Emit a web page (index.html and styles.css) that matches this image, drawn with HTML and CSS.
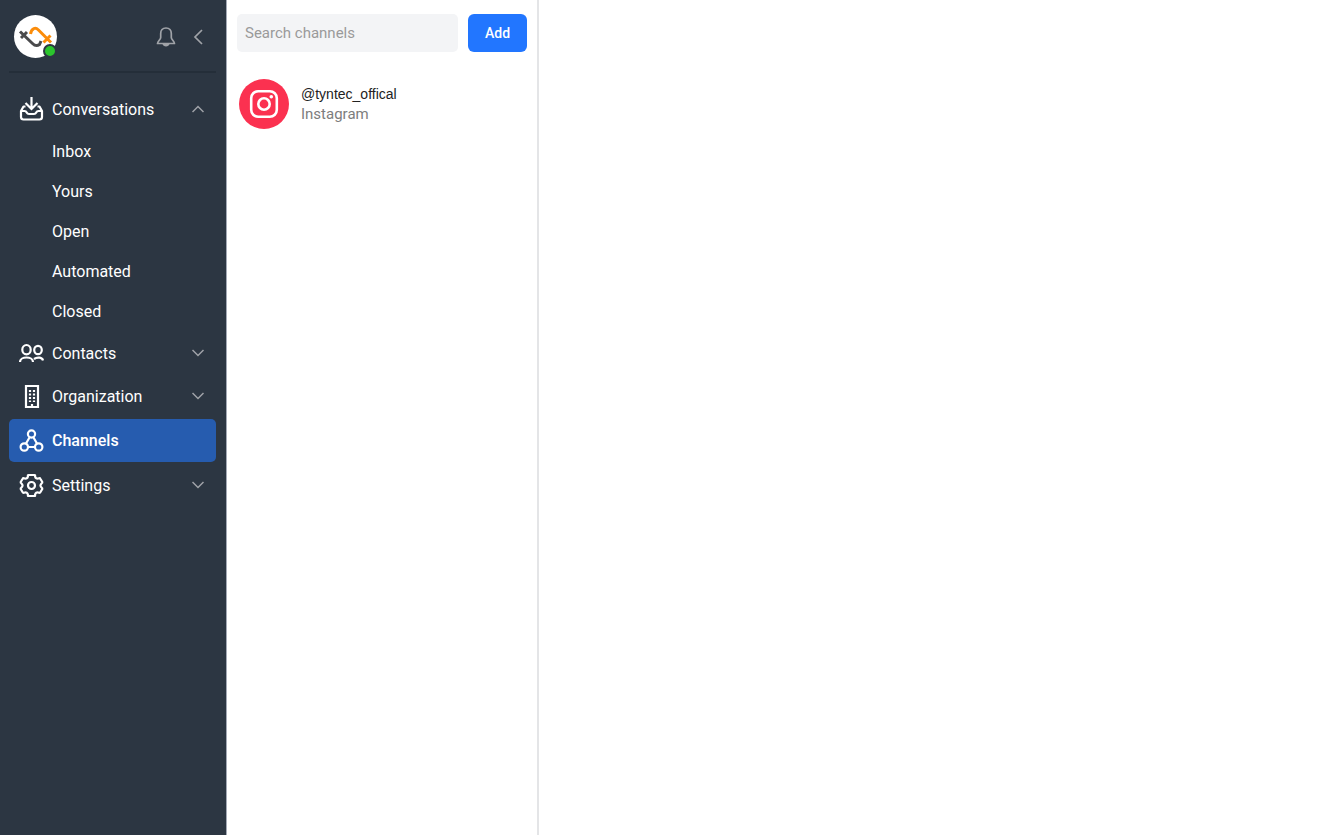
FILE: index.html
```html
<!DOCTYPE html>
<html lang="en">
<head>
    <meta charset="UTF-8">
    <meta name="viewport" content="width=device-width, initial-scale=1.0">
    <title>Channels</title>
    <link rel="stylesheet" href="styles.css">
</head>
<body>
    <div class="app">
        <aside class="sidebar">
            <div class="sidebar-header">
                <div class="avatar">
                    <svg width="43" height="43" viewBox="0 0 43 43" fill="none" stroke-width="3">
                        <path stroke="#4a4a4c" d="M6 16.500L18.500 28.500Q22 32 25.500 29.500L27 26M7 23l6-6"/>
                        <path stroke="#fb8c0a" d="M16.500 19Q17 15 20 13.500Q22 12.500 24.500 15L37 27.500M29.500 27.500l7-7"/>
                    </svg>
                    <span class="status"></span>
                </div>
                <button class="icon-button" aria-label="Notifications">
                    <svg width="20" height="22" viewBox="0 0 20 22" fill="none" stroke="currentColor" stroke-width="1.7" stroke-linejoin="round">
                        <path d="M10 2C6.500 2 4.700 4.500 4.700 7.500v4c0 2-2.900 3.500-3.200 6h17c-.3-2.500-3.200-4-3.200-6v-4C15.300 4.500 13.500 2 10 2z"/>
                        <path fill="currentColor" stroke="none" d="M6.500 18h7c-.3 1.600-1.800 2.500-3.500 2.500S6.800 19.600 6.500 18z"/>
                    </svg>
                </button>
                <button class="icon-button collapse" aria-label="Collapse menu">
                    <svg width="10" height="16" viewBox="0 0 10 16" fill="none" stroke="currentColor" stroke-width="1.7">
                        <path d="M9 1L2 8l7 7"/>
                    </svg>
                </button>
            </div>

            <nav class="menu">
                <a class="menu-item" href="#">
                    <svg class="icon" viewBox="0 0 25 25">
                        <path d="M12.500 0v11.500M6.500 6l6 6 6-6"/>
                        <path stroke-linejoin="round" d="M6.500 9.500H4.500L2 14v6q0 2.500 2.500 2.500h16q2.500 0 2.500-2.500v-6l-2.500-4.500h-2"/>
                        <path d="M2 14h3.500q1.500 0 2.200 1.500t2.300 1.500h5q1.500 0 2.200-1.500t2.300-1.500H23"/>
                    </svg>
                    <span>Conversations</span>
                    <svg class="chevron" viewBox="0 0 12 8"><path d="M0.500 7L6 1.500 11.500 7"/></svg>
                </a>
                <div class="submenu">
                    <a href="#">Inbox</a>
                    <a href="#">Yours</a>
                    <a href="#">Open</a>
                    <a href="#">Automated</a>
                    <a href="#">Closed</a>
                </div>
                <a class="menu-item" href="#">
                    <svg class="icon" viewBox="0 0 25 25">
                        <ellipse cx="7.500" cy="8.700" rx="4.200" ry="4.700"/>
                        <ellipse cx="19" cy="9" rx="3.800" ry="4.200"/>
                        <path d="M1 21c0-6 13-6 13 0M15 18c3.500-2.500 8.500-1.500 9 1.500"/>
                    </svg>
                    <span>Contacts</span>
                    <svg class="chevron" viewBox="0 0 12 8"><path d="M0.500 1L6 6.500 11.500 1"/></svg>
                </a>
                <a class="menu-item" href="#">
                    <svg class="icon" viewBox="0 0 25 25">
                        <path d="M7 2h12v21H7z"/>
                        <path stroke-dasharray="2 1.500" d="M11 6v12M15 6v12"/>
                        <path d="M13 20v3"/>
                    </svg>
                    <span>Organization</span>
                    <svg class="chevron" viewBox="0 0 12 8"><path d="M0.500 1L6 6.500 11.500 1"/></svg>
                </a>
                <a class="menu-item active" href="#">
                    <svg class="icon" viewBox="0 0 25 25">
                        <circle cx="12.500" cy="6" r="3.600"/>
                        <circle cx="5.300" cy="19" r="3.700"/>
                        <circle cx="19.700" cy="19" r="3.700"/>
                        <path d="M10.800 9L7 15.500M14.200 9L18 15.500M9 19h7"/>
                    </svg>
                    <span>Channels</span>
                </a>
                <a class="menu-item" href="#">
                    <svg class="icon" viewBox="0 0 25 25">
                        <path stroke-linejoin="round" d="M9 3Q8.500 2 9.500 2H15.500Q16.500 2 16 3Q16.500 6.500 20 5.300Q21 5 21.500 6L23.300 9Q23.500 10 22.700 10.300Q20.200 12.500 22.700 14.700Q23.500 15 23.300 16L21.500 19Q21 20 20 19.700Q16.500 18.500 16 22Q16.500 23 15.500 23H9.500Q8.500 23 9 22Q8.500 18.500 5 19.700Q4 20 3.500 19L1.700 16Q1.500 15 2.300 14.700Q4.800 12.500 2.300 10.300Q1.500 10 1.700 9L3.500 6Q4 5 5 5.300Q8.500 6.500 9 3z"/>
                        <circle cx="12.500" cy="12.500" r="3.500"/>
                    </svg>
                    <span>Settings</span>
                    <svg class="chevron" viewBox="0 0 12 8"><path d="M0.500 1L6 6.500 11.500 1"/></svg>
                </a>
            </nav>
        </aside>

        <section class="channels">
            <form class="toolbar">
                <input class="search" type="text" placeholder="Search channels" aria-label="Search channels">
                <button class="add" type="button">Add</button>
            </form>
            <a class="channel" href="#">
                <svg class="channel-logo" viewBox="0 0 50 50" fill="none" stroke="#fff" stroke-width="2.600">
                    <circle cx="25" cy="25" r="25" fill="#fb3150" stroke="none"/>
                    <rect x="12.200" y="12.200" width="25.600" height="25.600" rx="7"/>
                    <circle cx="25" cy="25" r="5.700"/>
                    <circle cx="32.300" cy="17.700" r="1.800" fill="#fff" stroke="none"/>
                </svg>
                <div class="channel-info">
                    <div class="channel-name">@tyntec_offical</div>
                    <div class="channel-type">Instagram</div>
                </div>
            </a>
        </section>

        <main class="content"></main>
    </div>
</body>
</html>
```
FILE: styles.css
```css
* {
    box-sizing: border-box;
}

body {
    margin: 0;
    font-family: Roboto, sans-serif;
    background-color: #fff;
}

a {
    color: inherit;
    text-decoration: none;
}

button {
    border: none;
    font-family: inherit;
    cursor: pointer;
}

svg {
    display: block;
}

.app {
    display: flex;
    min-height: 100vh;
}

.sidebar {
    flex: none;
    width: 227px;
    padding: 0 10px 0 9px;
    background-color: #2c3642;
    border-right: 1px solid #a3a9b5;
    color: #fff;
}

.sidebar-header {
    display: flex;
    align-items: center;
    height: 73px;
    padding: 2px 13px 0 5px;
    border-bottom: 2px solid #242e39;
}

.avatar {
    position: relative;
    margin-right: auto;
    border-radius: 50%;
    background-color: #fff;
}

.status {
    position: absolute;
    right: 0;
    bottom: 0;
    width: 14px;
    height: 14px;
    border: 2px solid #2c3642;
    border-radius: 50%;
    background-color: #2bc52d;
}

.icon-button {
    padding: 0;
    background: none;
    color: #a0a3a8;
}

.collapse {
    margin-left: 17px;
}

.menu {
    display: flex;
    flex-direction: column;
    gap: 1px;
    padding-top: 15px;
    font-size: 16px;
}

.menu-item {
    display: flex;
    align-items: center;
    gap: 8px;
    height: 42px;
    padding: 0 12px 0 10px;
    border-radius: 5px;
}

.menu-item.active {
    height: 43px;
    margin: 1px 0;
    background-color: #265caf;
    font-weight: 500;
}

.icon {
    width: 25px;
    height: 25px;
    fill: none;
    stroke: #fff;
    stroke-width: 2.2;
}

.chevron {
    width: 12px;
    height: 8px;
    margin-left: auto;
    fill: none;
    stroke: #a0a3a8;
    stroke-width: 1.5;
}

.submenu a {
    display: flex;
    align-items: center;
    height: 40px;
    padding-left: 43px;
}

.channels {
    flex: none;
    width: 312px;
    padding: 14px 10px;
    border-right: 2px solid #e4e5e7;
}

.toolbar {
    display: flex;
    gap: 10px;
    height: 38px;
}

.search {
    flex: 1;
    min-width: 0;
    padding: 0 8px;
    border: none;
    border-radius: 5px;
    background-color: #f3f4f6;
    font: 15px Roboto, sans-serif;
}

.search::placeholder {
    color: #9a9a9a;
}

.add {
    width: 59px;
    border-radius: 6px;
    background-color: #2276ff;
    color: #fff;
    font-size: 14px;
    font-weight: 500;
}

.channel {
    display: flex;
    align-items: center;
    gap: 12px;
    margin-top: 27px;
    padding-left: 2px;
}

.channel-logo {
    width: 50px;
    height: 50px;
}

.channel-info {
    line-height: 20px;
}

.channel-name {
    color: #222;
    font-family: "Liberation Sans", sans-serif;
    font-size: 14px;
}

.channel-type {
    color: #7d7d7d;
    font-size: 15px;
}

.content {
    flex: 1;
}
```
